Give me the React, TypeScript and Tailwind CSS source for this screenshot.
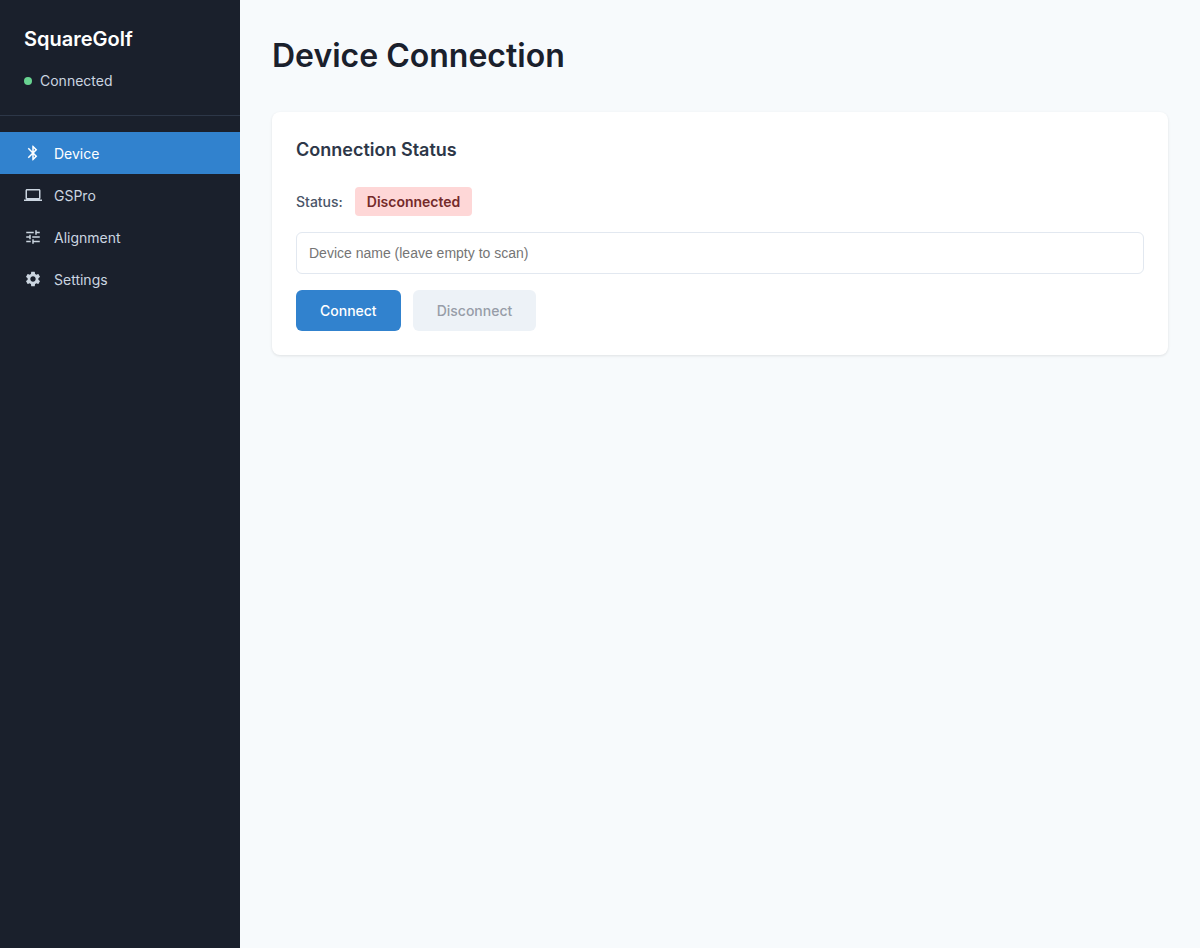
import { useState } from "react";
import { MdBluetooth, MdComputer, MdTune, MdSettings } from "react-icons/md";

const items = [
  { label: "Device", Icon: MdBluetooth },
  { label: "GSPro", Icon: MdComputer },
  { label: "Alignment", Icon: MdTune },
  { label: "Settings", Icon: MdSettings },
];

export default function App() {
  const [active, setActive] = useState("Device");
  const [name, setName] = useState("");
  return (
    <div className="flex min-h-screen bg-[#f7fafc] font-['Inter',sans-serif] text-sm text-[#1a202c]">
      <aside className="w-60 shrink-0 bg-[#1a202c]">
        <div className="border-b border-[#2d3748] px-6 pt-6 pb-6">
          <div className="text-xl leading-[30px] font-semibold text-white">SquareGolf</div>
          <div className="mt-4 flex items-center gap-2 leading-[21px] text-[#cbd5e0]">
            <span className="size-2 rounded-full bg-[#68d391]" />
            Connected
          </div>
        </div>
        <nav className="flex flex-col py-4">
          {items.map(({ label, Icon }) => (
            <a
              key={label}
              href={"#" + label.toLowerCase()}
              onClick={() => setActive(label)}
              className={
                active === label
                  ? "flex h-[42px] items-center gap-3 bg-[#3182ce] px-6 leading-[21px] text-white"
                  : "flex h-[42px] items-center gap-3 px-6 leading-[21px] text-[#cbd5e0]"
              }
            >
              <Icon className="size-[18px]" />
              {label}
            </a>
          ))}
        </nav>
      </aside>
      <main className="min-w-0 flex-1 p-8">
        <h1 className="mb-8 text-[32px] leading-[48px] font-semibold">Device Connection</h1>
        <section className="rounded-lg bg-white p-6 shadow-[0_1px_3px_rgba(0,0,0,0.1)]">
          <h2 className="mb-6 text-lg leading-[27px] font-semibold text-[#2d3748]">Connection Status</h2>
          <div className="mb-4 flex items-center gap-3">
            <span className="font-medium text-[#4a5568]">Status:</span>
            <span className="rounded bg-[#fed7d7] px-3 py-1 leading-[21px] font-semibold text-[#742a2a]">Disconnected</span>
          </div>
          <input
            type="text"
            aria-label="Device name"
            value={name}
            onChange={(e) => setName(e.target.value)}
            placeholder="Device name (leave empty to scan)"
            className="mb-4 block h-[42px] w-full rounded-md border border-[#e2e8f0] bg-white px-3 font-['Liberation_Sans',sans-serif] placeholder:text-[#757575]"
          />
          <div className="flex gap-3">
            <button type="button" className="h-[41px] rounded-md bg-[#3182ce] px-6 font-medium text-white">Connect</button>
            <button type="button" disabled className="h-[41px] rounded-md bg-[#edf2f7] px-6 font-medium text-[#979da8]">Disconnect</button>
          </div>
        </section>
      </main>
    </div>
  );
}
